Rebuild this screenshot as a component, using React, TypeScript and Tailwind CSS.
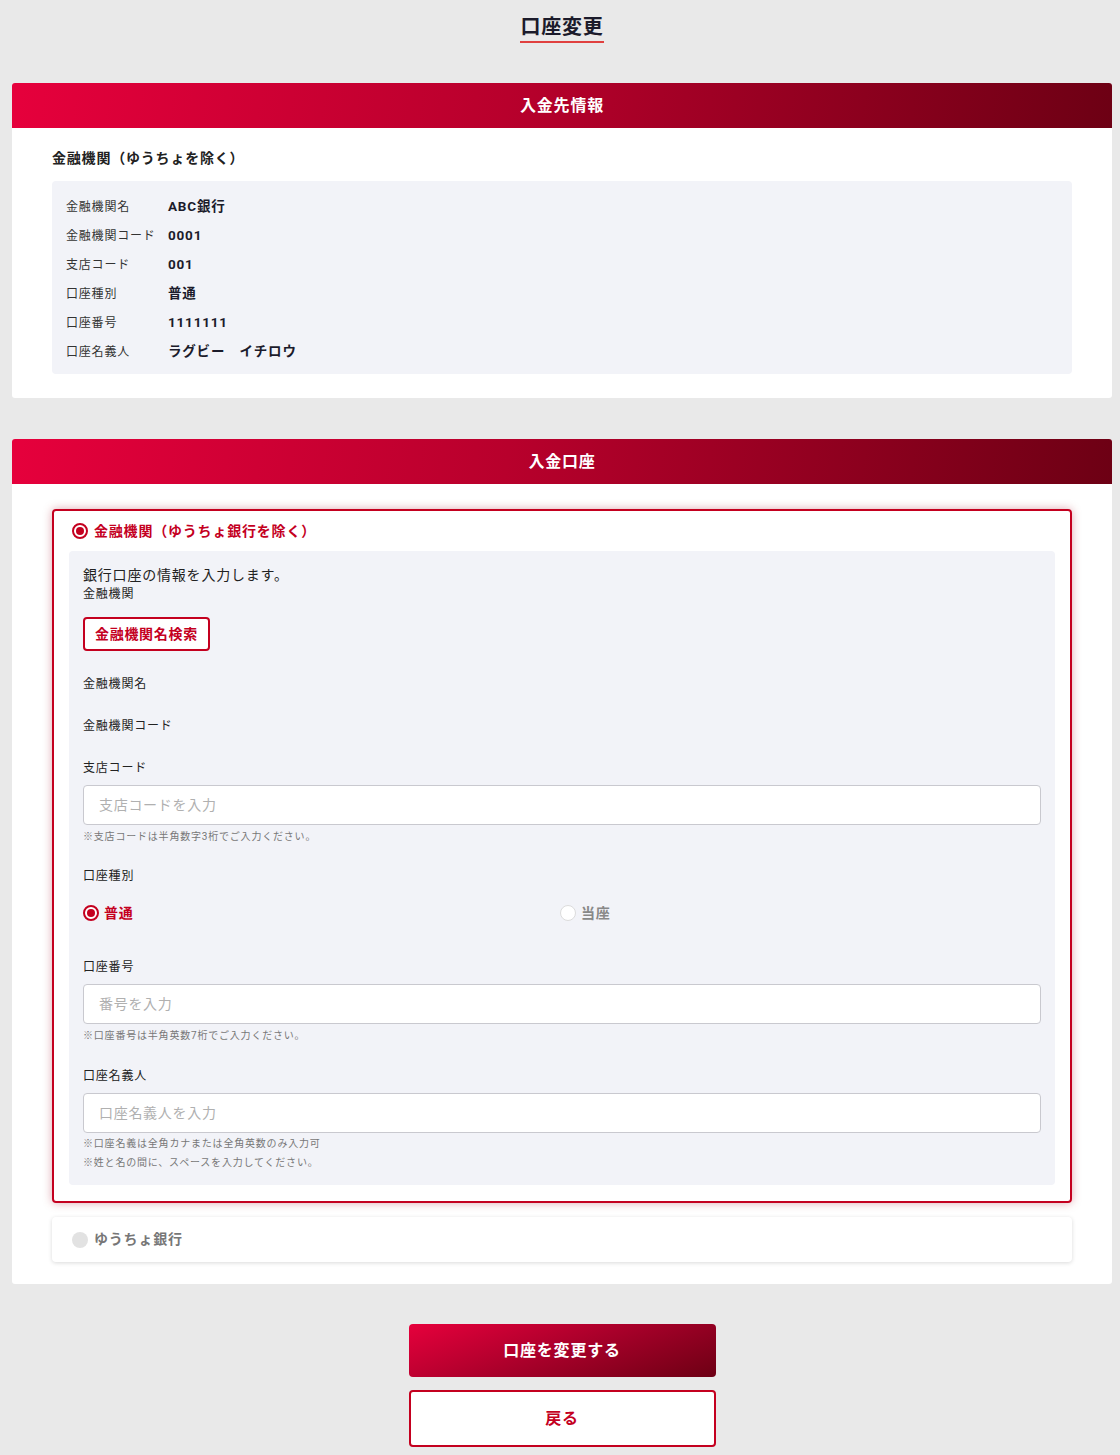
import React from 'react';

const font = { fontFamily: 'Roboto, "Noto Sans CJK JP", sans-serif' };

const SectionHeader: React.FC<{ title: string }> = ({ title }) => (
  <div className="h-[45px] rounded-t-[3px] bg-[linear-gradient(98deg,#e6003c_0%,#b8002c_45%,#6d0014_100%)] flex items-center justify-center">
    <h2 className="text-white font-bold text-[16px]">{title}</h2>
  </div>
);

const Radio: React.FC<{ checked?: boolean; muted?: boolean }> = ({ checked, muted }) =>
  checked ? (
    <span className="w-[16px] h-[16px] rounded-full border-2 border-[#c4001f] bg-white flex items-center justify-center">
      <span className="w-[8px] h-[8px] rounded-full bg-[#c4001f]"></span>
    </span>
  ) : muted ? (
    <span className="w-[16px] h-[16px] rounded-full bg-[#e2e2e2]"></span>
  ) : (
    <span className="w-[16px] h-[16px] rounded-full border border-[#dcdcdc] bg-white"></span>
  );

const Input: React.FC<{ placeholder: string }> = ({ placeholder }) => (
  <input
    placeholder={placeholder}
    className="mt-[8px] block w-[958px] h-[40px] bg-white border border-[#c9c9cf] rounded-[4px] px-[15px] text-[14px] tracking-[0.05em] placeholder:text-[#b0b0b0] outline-none"
    style={font}
  />
);

const Note: React.FC<{ children: React.ReactNode }> = ({ children }) => (
  <p className="text-[10px] text-[#777] leading-[19px]">{children}</p>
);

const info = [
  ['金融機関名', 'ABC銀行'],
  ['金融機関コード', '0001'],
  ['支店コード', '001'],
  ['口座種別', '普通'],
  ['口座番号', '1111111'],
  ['口座名義人', 'ラグビー　イチロウ'],
];

export default function App() {
  return (
    <div className="min-h-[1455px] bg-[#e9e9e9] pl-[12px] pr-[8px] pb-[8px] text-[#222] tracking-[0.05em]" style={font}>
      <div className="pt-[14px] flex justify-center">
        <h1 className="text-[20px] font-bold leading-[26px] text-[#1b1b2b] border-b-2 border-[#e0413f] pb-[1px]">口座変更</h1>
      </div>

      <section className="mt-[40px] bg-white rounded-[3px]">
        <SectionHeader title="入金先情報" />
        <div className="px-[40px] pt-[22px] pb-[24px]">
          <p className="text-[14px] font-bold leading-[16px]">金融機関（ゆうちょを除く）</p>
          <div className="mt-[15px] bg-[#f2f3f8] rounded-[4px] px-[14px] pt-[11px] pb-[8px]">
            {info.map(([k, v]) => (
              <div key={k} className="flex items-center h-[29px]">
                <span className="w-[102px] text-[12px] text-[#333]">{k}</span>
                <span className="text-[13.5px] font-bold text-[#1b1b2b]">{v}</span>
              </div>
            ))}
          </div>
        </div>
      </section>

      <section className="mt-[41px] bg-white rounded-[3px]">
        <SectionHeader title="入金口座" />
        <div className="px-[40px] pt-[25px] pb-[22px]">
          <div className="border-2 border-[#c4001f] rounded-[4px] shadow-[0_0_10px_rgba(160,0,30,0.35)] px-[15px] pt-[10px] pb-[16px]">
            <div className="flex items-center gap-[6px] h-[20px] px-[3px]">
              <Radio checked />
              <span className="text-[14px] font-bold text-[#c4001f]">金融機関（ゆうちょ銀行を除く）</span>
            </div>
            <div className="mt-[10px] bg-[#f2f3f8] rounded-[4px] px-[14px] pt-[14px] pb-[13px]">
              <p className="text-[14px] leading-[20px]">銀行口座の情報を入力します。</p>
              <p className="text-[12px] leading-[18px]">金融機関</p>
              <button className="mt-[14px] h-[34px] px-[10px] border-2 border-[#c4001f] rounded-[4px] bg-white text-[#c4001f] text-[14px] font-bold tracking-[0.05em]">
                金融機関名検索
              </button>
              <p className="mt-[24px] text-[12px] leading-[18px]">金融機関名</p>
              <p className="mt-[24px] text-[12px] leading-[18px]">金融機関コード</p>

              <p className="mt-[24px] text-[12px] leading-[18px]">支店コード</p>
              <Input placeholder="支店コードを入力" />
              <div className="mt-[2px]">
                <Note>※支店コードは半角数字3桁でご入力ください。</Note>
              </div>

              <p className="mt-[21px] text-[12px] leading-[18px]">口座種別</p>
              <div className="mt-[20px] grid grid-cols-2">
                <label className="flex items-center gap-[5px] h-[16px]">
                  <Radio checked />
                  <span className="text-[14px] font-bold text-[#c4001f]">普通</span>
                </label>
                <label className="flex items-center gap-[5px] h-[16px] -ml-[2px]">
                  <Radio />
                  <span className="text-[14px] font-bold text-[#888]">当座</span>
                </label>
              </div>

              <p className="mt-[37px] text-[12px] leading-[18px]">口座番号</p>
              <Input placeholder="番号を入力" />
              <div className="mt-[2px]">
                <Note>※口座番号は半角英数7桁でご入力ください。</Note>
              </div>

              <p className="mt-[22px] text-[12px] leading-[18px]">口座名義人</p>
              <Input placeholder="口座名義人を入力" />
              <div className="mt-[1px]">
                <Note>※口座名義は全角カナまたは全角英数のみ入力可</Note>
                <Note>※姓と名の間に、スペースを入力してください。</Note>
              </div>
            </div>
          </div>

          <div className="mt-[14px] h-[45px] bg-white rounded-[4px] shadow-[0_1px_4px_rgba(0,0,0,0.15)] flex items-center gap-[6px] px-[20px]">
            <Radio muted />
            <span className="text-[14px] font-bold text-[#777]">ゆうちょ銀行</span>
          </div>
        </div>
      </section>

      <div className="mt-[40px] flex flex-col items-center gap-[13px]">
        <button className="w-[307px] h-[53px] rounded-[4px] bg-[linear-gradient(160deg,#e6003c_0%,#a8002a_50%,#6d0014_100%)] text-white text-[16px] font-bold tracking-[0.05em]">
          口座を変更する
        </button>
        <button className="w-[307px] h-[57px] rounded-[4px] border-2 border-[#c4001f] bg-white text-[#c4001f] text-[16px] font-bold tracking-[0.05em]">
          戻る
        </button>
      </div>
    </div>
  );
}
